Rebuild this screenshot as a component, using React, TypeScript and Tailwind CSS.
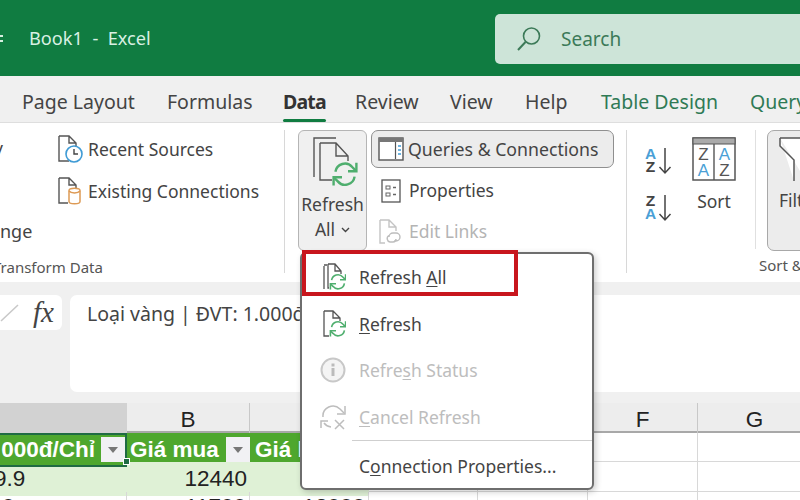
const ui = { fontFamily: '"Noto Sans", "Open Sans", sans-serif' };

const tabs = [
  { label: "Page Layout", w: "w-[145px]", cls: "text-[#444]" },
  { label: "Formulas", w: "w-[116px]", cls: "text-[#444]" },
  { label: "Data", w: "w-[72px]", cls: "text-[#333] font-bold tracking-[-0.8px]" },
  { label: "Review", w: "w-[95px]", cls: "text-[#444]" },
  { label: "View", w: "w-[75px]", cls: "text-[#444]" },
  { label: "Help", w: "w-[76px]", cls: "text-[#444]" },
  { label: "Table Design", w: "w-[149px]", cls: "text-[#2f7a55]" },
  { label: "Query", w: "w-[80px]", cls: "text-[#2f7a55]" },
];

function Sync({ x, y, s }: { x: number; y: number; s: number }) {
  return (
    <g transform={`translate(${x} ${y}) scale(${s})`} fill="none" stroke="#4fae6e" strokeWidth={2}>
      <path d="M2 9a8 8 0 0 1 14-4l3 3" />
      <path d="M19.500 1.500v7h-7" />
      <path d="M18 13a8 8 0 0 1-14 4l-3-3" />
      <path d="M.5 20.500v-7h7" />
    </g>
  );
}

function RecentIcon() {
  return (
    <svg width="26" height="28" viewBox="0 0 26 28" className="shrink-0">
      <path d="M1 1h10l7 7v5M11 1v7h7M11 26H1V1" fill="none" stroke="#555" strokeWidth={1.4} />
      <circle cx="16" cy="19" r="8" fill="#fff" stroke="#3f9bd5" strokeWidth={1.6} />
      <path d="M16 14v5h4" fill="none" stroke="#444" strokeWidth={1.4} />
    </svg>
  );
}

function ExistingIcon() {
  return (
    <svg width="26" height="28" viewBox="0 0 26 28" className="shrink-0">
      <path d="M1 1h10l7 7v3M11 1v7h7M10 26H1V1" fill="none" stroke="#555" strokeWidth={1.4} />
      <path d="M11 13.500c0-3 11-3 11 0v11c0 3-11 3-11 0z" fill="#fff" stroke="#dd9a55" strokeWidth={1.5} />
      <path d="M11 14c2 2.500 9 2.500 11 0" fill="none" stroke="#dd9a55" strokeWidth={1.5} />
    </svg>
  );
}

function QueriesIcon() {
  return (
    <svg width="26" height="24" viewBox="0 0 26 24" className="shrink-0">
      <rect x="1" y="1" width="24" height="22" fill="#fff" stroke="#555" strokeWidth={1.4} />
      <rect x="1" y="1" width="24" height="4" fill="#777" />
      <path d="M17.500 5v17" stroke="#555" strokeWidth={1.2} />
      <path d="M20 9h3M20 13h3M20 17h3" stroke="#3f9bd5" strokeWidth={1.6} />
    </svg>
  );
}

function PropertiesIcon() {
  return (
    <svg width="20" height="24" viewBox="0 0 20 24" className="shrink-0">
      <rect x="1" y="1" width="18" height="22" fill="#fff" stroke="#555" strokeWidth={1.3} />
      <rect x="5" y="7" width="4" height="3" fill="none" stroke="#666" />
      <rect x="5" y="14" width="4" height="3" fill="none" stroke="#666" />
      <path d="M12 8.500h3M12 15.500h3" stroke="#666" strokeWidth={1.3} />
    </svg>
  );
}

function EditLinksIcon() {
  return (
    <svg width="24" height="26" viewBox="0 0 24 26" className="shrink-0">
      <path d="M1 1h9l7 7v4M10 1v7h7M6 24H1V1" fill="none" stroke="#c4c4c4" strokeWidth={1.4} />
      <path d="M10 18a4 4 0 0 1 4-4h3a4 4 0 0 1 0 8h-2M17 20a3 3 0 0 1-3 3h-3a3.500 3.500 0 0 1-1-6.500" fill="none" stroke="#bdbdbd" strokeWidth={1.4} />
    </svg>
  );
}

function AzIcon({ top, bottom }: { top: string; bottom: string }) {
  return (
    <svg width="28" height="30" viewBox="0 0 28 30">
      <text x="6.500" y="13" textAnchor="middle" fontSize="15.500" fontFamily="Liberation Sans, sans-serif" fontWeight="bold" fill={top === "A" ? "#4a9fd6" : "#444"}>{top}</text>
      <text x="6.500" y="26" textAnchor="middle" fontSize="15.500" fontFamily="Liberation Sans, sans-serif" fontWeight="bold" fill={bottom === "A" ? "#4a9fd6" : "#444"}>{bottom}</text>
      <path d="M21 2v25M15.500 21l5.500 6 5.500-6" fill="none" stroke="#444" strokeWidth={1.5} />
    </svg>
  );
}

function SortBigIcon() {
  const letter = (x: number, y: number, t: string, c: string) => (
    <text x={x} y={y} textAnchor="middle" fontSize="17" fontFamily="Liberation Sans, sans-serif" fill={c}>{t}</text>
  );
  return (
    <svg width="44" height="44" viewBox="0 0 44 44">
      <rect x="1" y="1" width="42" height="42" fill="#fff" stroke="#555" strokeWidth={1.5} />
      <rect x="1" y="1" width="42" height="6" fill="#aaa" stroke="#555" strokeWidth={1} />
      <path d="M22 7v36" stroke="#555" strokeWidth={1.4} />
      {letter(11.500, 23, "Z", "#555")}
      {letter(11.500, 39, "A", "#4a9fd6")}
      {letter(32.500, 23, "A", "#4a9fd6")}
      {letter(32.500, 39, "Z", "#555")}
    </svg>
  );
}

function RefreshAllSmall() {
  return (
    <svg width="26" height="28" viewBox="0 0 26 28" className="shrink-0">
      <path d="M4 3v23M4 2h3" fill="none" stroke="#555" strokeWidth={1.3} />
      <path d="M8 1h7l6 7v3M15 1v7h6M9 25H8V1" fill="none" stroke="#555" strokeWidth={1.3} />
      <Sync x={10} y={10} s={0.8} />
    </svg>
  );
}

function RefreshSmall() {
  return (
    <svg width="26" height="28" viewBox="0 0 26 28" className="shrink-0">
      <path d="M4 1h9l7 7v3M13 1v7h7M9 26H4V1" fill="none" stroke="#555" strokeWidth={1.3} />
      <Sync x={10} y={10} s={0.8} />
    </svg>
  );
}

function StatusIcon() {
  return (
    <svg width="26" height="26" viewBox="0 0 26 26" className="shrink-0">
      <circle cx="13" cy="13" r="11.500" fill="#f4f4f4" stroke="#c8c8c8" strokeWidth={2} />
      <rect x="11.500" y="11" width="3" height="8" fill="#bbb" />
      <rect x="11.500" y="6.500" width="3" height="3" fill="#bbb" />
    </svg>
  );
}

function CancelIcon() {
  return (
    <svg width="27" height="26" viewBox="0 0 27 26" className="shrink-0">
      <g fill="none" stroke="#bdbdbd" strokeWidth={1.5}>
        <path d="M3 13a10 10 0 0 1 17-8l4 4" />
        <path d="M25 2v8h-8" />
        <path d="M11 23a10 10 0 0 1-7-4" />
        <path d="M1 24v-7h7" />
        <path d="M15 16l9 9M24 16l-9 9" />
      </g>
    </svg>
  );
}

const menuRows = [
  { icon: <RefreshAllSmall />, text: <>Refresh <span className="underline underline-offset-2">A</span>ll</>, off: false },
  { icon: <RefreshSmall />, text: <><span className="underline underline-offset-2">R</span>efresh</>, off: false },
  { icon: <StatusIcon />, text: <>Refre<span className="underline underline-offset-2">s</span>h Status</>, off: true },
  { icon: <CancelIcon />, text: <><span className="underline underline-offset-2">C</span>ancel Refresh</>, off: true },
];

function FilterBtn() {
  return (
    <div className="w-[24px] h-[25px] bg-[#f1f1f4] flex items-center justify-center shrink-0">
      <div className="w-0 h-0 border-l-[5px] border-r-[5px] border-t-[6px] border-l-transparent border-r-transparent border-t-[#777]" />
    </div>
  );
}

const grid = "grid grid-cols-[127px_123px_119px_109px_110px_110px_110px]";

export default function App() {
  return (
    <div className="relative w-[800px] h-[500px] overflow-hidden bg-[#f0f0f0] flex flex-col" style={ui}>
      {/* title bar */}
      <div className="h-[76px] shrink-0 bg-[#107c41] flex items-center">
        <div className="w-[29px] shrink-0 flex flex-col gap-[3px] pt-[1px]">
          <div className="w-[3px] h-[2px] bg-[#d6f0e0]" />
          <div className="w-[3px] h-[2px] bg-[#d6f0e0]" />
        </div>
        <span className="text-[18.200px] text-[#d9f0e3] whitespace-pre mt-[1px]">Book1  -  Excel</span>
        <div className="ml-auto mt-[1px] w-[305px] h-[50px] bg-[#cde4d8] rounded-l-[5px] flex items-center pl-[21px] gap-[19px]">
          <svg width="26" height="26" viewBox="0 0 26 26">
            <circle cx="15.500" cy="10" r="8" fill="none" stroke="#3c7a58" strokeWidth={1.6} />
            <path d="M9.500 16L2 24" stroke="#3c7a58" strokeWidth={2} />
          </svg>
          <span className="text-[19px] text-[#3c7a58] mt-[1px]">Search</span>
        </div>
      </div>

      {/* tabs */}
      <div className="h-[46px] shrink-0 bg-[#f0f0f0] flex pl-[22px] text-[19.500px] whitespace-nowrap">
        {tabs.map((t) => (
          <div key={t.label} className={`${t.w} shrink-0 pt-[11px]`}>
            <span className={`relative inline-block leading-[28px] ${t.cls}`}>
              {t.label}
              {t.label === "Data" && <span className="absolute left-0 right-0 top-[31px] h-[3px] rounded bg-[#107c41]" />}
            </span>
          </div>
        ))}
      </div>

      {/* ribbon */}
      <div className="h-[160px] shrink-0 bg-white flex text-[#444] text-[17.500px] whitespace-nowrap border-t border-[#dedede]">
        {/* Get & Transform group, cut off on the left */}
        <div className="w-[285px] shrink-0 mt-[7px] mb-[9px] border-r border-[#d8d8d8] flex flex-col relative">
          <div className="flex-1 flex">
            <div className="w-[58px] shrink-0 flex flex-col">
              <span className="mt-[5px] -ml-[6px] text-[#444]">y</span>
              <span className="mt-[58px] h-[24px] leading-[24px] w-[40px] text-[18px]">nge</span>
            </div>
            <div className="flex flex-col gap-[14px] pt-[5px]">
              <div className="flex items-center gap-[4px] h-[28px]"><RecentIcon />Recent Sources</div>
              <div className="flex items-center gap-[4px] h-[28px]"><ExistingIcon />Existing Connections</div>
            </div>
          </div>
          <span className="text-[15px] text-[#555] -ml-[7px] -mb-[5px]">Transform Data</span>
        </div>

        {/* Queries group */}
        <div className="w-[342px] shrink-0 mt-[7px] mb-[9px] border-r border-[#d8d8d8] flex pl-[13px] gap-[4px] items-start">
          <div className="w-[69px] h-[121px] bg-[#f0f0f0] border border-[#b5b5b5] rounded-[6px] flex flex-col items-center">
            <svg width="50" height="55" viewBox="0 0 50 55" className="mt-[6px] shrink-0">
              <path d="M6 40V1h22" fill="none" stroke="#555" strokeWidth={1.4} />
              <path d="M12 6h16l12 13v5M28 6v13h12M24 43H12V6" fill="none" stroke="#555" strokeWidth={1.4} />
              <Sync x={25} y={24} s={1.2} />
            </svg>
            <span className="text-[17.500px] leading-[25px]">Refresh</span>
            <span className="text-[17.500px] leading-[25px] flex items-center gap-[6px]">All
              <svg width="9" height="6" viewBox="0 0 9 6"><path d="M1 1l3.500 3.500L8 1" fill="none" stroke="#444" strokeWidth={1.4} /></svg>
            </span>
          </div>
          <div className="flex flex-col w-[243px]">
            <div className="h-[38px] bg-[#ececec] border border-[#8f8f8f] rounded-[7px] flex items-center pl-[6px] gap-[4px] text-[17.700px]"><QueriesIcon />Queries &amp; Connections</div>
            <div className="h-[41px] mt-[2px] flex items-center pl-[10px] gap-[8px]"><PropertiesIcon />Properties</div>
            <div className="h-[41px] flex items-center pl-[8px] gap-[6px] text-[#b4b4b4]"><EditLinksIcon />Edit Links</div>
          </div>
        </div>

        {/* Sort group */}
        <div className="flex-1 mt-[7px] mb-[9px] flex flex-col relative">
          <div className="flex flex-1 overflow-hidden">
            <div className="w-[129px] shrink-0 border-r border-[#e0e0e0] mb-[5px] flex">
              <div className="w-[65px] pl-[17px] pt-[16px] flex flex-col gap-[17px]">
                <AzIcon top="A" bottom="Z" />
                <AzIcon top="Z" bottom="A" />
              </div>
              <div className="flex flex-col items-center w-[44px]">
                <div className="mt-[7px]"><SortBigIcon /></div>
                <span className="mt-[7px]">Sort</span>
              </div>
            </div>
            <div className="ml-[11px] w-[60px] h-[121px] shrink-0 bg-[#ececec] border border-[#a8a8a8] rounded-[7px] flex flex-col pl-[11px]">
              <svg width="50" height="44" viewBox="0 0 50 44" className="mt-[6px] shrink-0">
                <path d="M1 1h40v8L27 23v21M1 1v8l14 14v21" fill="#fff" stroke="#555" strokeWidth={1.5} />
              </svg>
              <span className="mt-[6px]">Filter</span>
            </div>
          </div>
          <span className="text-[15px] text-[#555] pl-[132px] -mb-[3px] overflow-hidden">Sort &amp; Filter</span>
        </div>
      </div>

      {/* formula bar */}
      <div className="shrink-0 pt-[13px] pb-[11px] flex items-start">
        <div className="w-[63px] h-[35px] -ml-[1px] bg-white rounded-r-[6px] flex items-center shrink-0">
          <svg width="20" height="20" viewBox="0 0 20 20" className="ml-[1px]"><path d="M1 18L18 2" stroke="#c8c8c8" strokeWidth={1.5} /></svg>
          <span className="ml-[13px] text-[29px] leading-none italic text-[#444]" style={{ fontFamily: '"Liberation Serif", serif' }}>fx</span>
        </div>
        <div className="ml-[8px] flex-1 h-[97px] bg-white rounded-l-[7px] pl-[17px] pt-[4px] text-[19.500px] text-[#444] whitespace-nowrap">
          Loại vàng | ĐVT: 1.000đ/Chỉ
        </div>
      </div>

      {/* sheet */}
      <div className="flex-1 bg-white text-[22.500px] text-[#222]" style={{ fontFamily: '"Liberation Sans", Arial, sans-serif' }}>
        <div className={`${grid} h-[30px] bg-[#ededed] border-b-[2px] border-[#a8a8a8]`}>
          <div className="bg-[#d2d2d2]" />
          {["B", "C", "D", "E", "F"].map((c) => (
            <div key={c} className="flex items-center justify-center border-r border-[#c8c8c8] pb-[3px]">{c}</div>
          ))}
          <div className="flex items-center justify-center pb-[3px] pl-[3px]">G</div>
        </div>
        <div className={`${grid} h-[29px] border-b border-[#d8d8d8]`}>
          <div className="relative bg-[#4ea72e] border-y-2 border-r-2 border-[#1f6b43] text-white font-bold flex items-center justify-end gap-[1px] overflow-hidden">
            <span className="whitespace-nowrap pr-[5px]">000đ/Chỉ</span>
            <FilterBtn />
          </div>
          <div className="bg-[#4ea72e] text-white font-bold flex items-center pl-[3px] justify-between">
            <span>Giá mua</span>
            <FilterBtn />
          </div>
          <div className="bg-[#4ea72e] text-white font-bold flex items-center pl-[5px]">Giá bán</div>
          {[0, 1, 2, 3].map((i) => <div key={i} className="border-r border-[#d8d8d8]" />)}
        </div>
        <div className={`${grid} h-[30px] border-b border-[#d8d8d8]`}>
          <div className="bg-[#dff1d6] overflow-hidden flex items-center whitespace-nowrap"><span className="-ml-[6px]">9.9</span></div>
          <div className="bg-[#dff1d6] flex items-center justify-end pr-[3px]">12440</div>
          <div className="bg-[#dff1d6] flex items-center justify-end pr-[3px]">12500</div>
          {[0, 1, 2, 3].map((i) => <div key={i} className="border-r border-[#d8d8d8]" />)}
        </div>
        <div className={`${grid} h-[30px]`}>
          <div className="flex items-start border-r border-[#d8d8d8] leading-[30px]"><span className="ml-[2px]">0</span></div>
          <div className="flex items-start justify-end pr-[3px] border-r border-[#d8d8d8] leading-[30px]">11700</div>
          <div className="flex items-start justify-end pr-[3px] border-r border-[#d8d8d8] leading-[30px]">12000</div>
          {[0, 1, 2, 3].map((i) => <div key={i} className="border-r border-[#d8d8d8]" />)}
        </div>
      </div>

      {/* selection handle */}
      <div className="absolute left-[123px] top-[458px] w-[7px] h-[7px] bg-[#1f6b43] border border-white" />

      {/* Refresh dropdown */}
      <div className="absolute left-[300px] top-[252px] w-[294px] h-[238px] bg-white border-2 border-[#6e6e6e] rounded-[6px] shadow-[2px_2px_6px_rgba(0,0,0,0.2)] text-[17.500px] text-[#444] whitespace-nowrap">
        {menuRows.map((r, i) => (
          <div key={i} className={`h-[46.500px] flex items-center pl-[19px] ${r.off ? "text-[#bdbdbd]" : ""}`}>
            <div className="w-[39px] shrink-0 -ml-[1px]">{r.icon}</div>
            <span>{r.text}</span>
          </div>
        ))}
        <div className="ml-[50px] h-px bg-[#cfcfcf]" />
        <div className="h-[50px] flex items-center pl-[57px]">
          <span>C<span className="underline underline-offset-2">o</span>nnection Properties...</span>
        </div>
      </div>

      {/* red highlight around the first item */}
      <div className="absolute left-[302px] top-[250px] w-[216px] h-[46px] border-[4px] border-[#c8161d]" />
    </div>
  );
}
